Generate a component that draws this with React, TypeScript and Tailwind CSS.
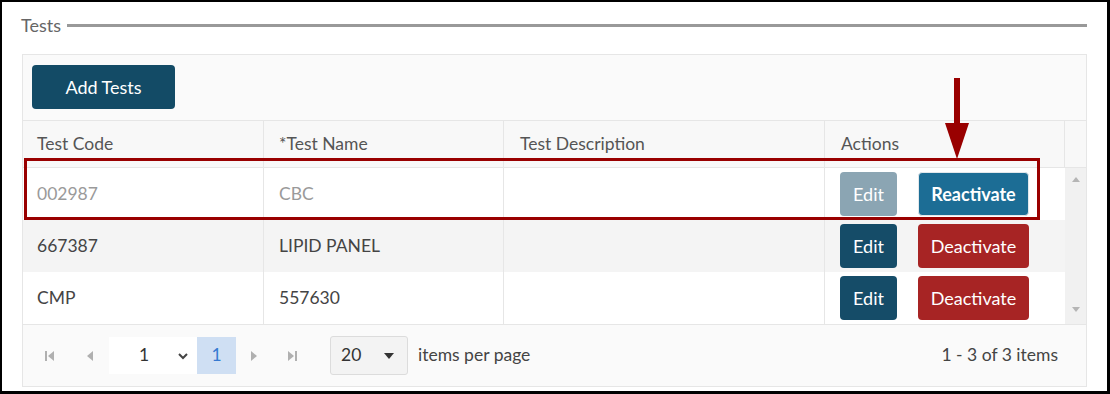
import React from 'react';

type Row = {
  code: string;
  name: string;
  description: string;
  active: boolean;
};

const rows: Row[] = [
  { code: '002987', name: 'CBC', description: '', active: false },
  { code: '667387', name: 'LIPID PANEL', description: '', active: true },
  { code: 'CMP', name: '557630', description: '', active: true },
];

const cols = 'grid grid-cols-[241px_240px_321px_1fr]';

function Tri({ dir, className }: { dir: 'left' | 'right' | 'up' | 'down'; className?: string }) {
  const points = {
    left: '8,2 8,12 2,7',
    right: '2,2 2,12 8,7',
    up: '1,8 9,8 5,3',
    down: '1,3 9,3 5,8',
  }[dir];
  return (
    <svg width="10" height="14" viewBox="0 0 10 14" className={className}>
      <polygon points={points} fill="currentColor" />
    </svg>
  );
}

function EdgeIcon({ dir }: { dir: 'first' | 'last' }) {
  return (
    <svg width="12" height="14" viewBox="0 0 12 14" className="text-[#b0b0b0]">
      {dir === 'first' ? (
        <>
          <rect x="1" y="2" width="2" height="10" fill="currentColor" />
          <polygon points="10,2 10,12 4,7" fill="currentColor" />
        </>
      ) : (
        <>
          <polygon points="2,2 2,12 8,7" fill="currentColor" />
          <rect x="9" y="2" width="2" height="10" fill="currentColor" />
        </>
      )}
    </svg>
  );
}

function ActionButtons({ active }: { active: boolean }) {
  return (
    <div className="flex items-center gap-[21px]">
      <button
        className={`h-[44px] w-[57px] rounded-[4px] text-[18px] text-white ${
          active ? 'bg-[#154c68]' : 'bg-[#8ba5b3]'
        }`}
      >
        Edit
      </button>
      {active ? (
        <button className="h-[44px] w-[111px] rounded-[4px] bg-[#a72424] text-[18px] text-white">
          Deactivate
        </button>
      ) : (
        <button className="h-[44px] w-[111px] rounded-[4px] border border-[#e2e8ec] bg-[#1c6d95] text-[18px] font-bold text-white">
          Reactivate
        </button>
      )}
    </div>
  );
}

export default function App() {
  return (
    <div className="relative h-[394px] w-[1110px] border-l-2 border-t-2 border-r-[3px] border-b-[3px] border-black bg-white font-['Lato',sans-serif]">
      {/* legend */}
      <div className="flex h-[52px] items-center pl-[19px] pr-[20px] pb-[6px]">
        <span className="text-[18px] leading-none text-[#666]">Tests</span>
        <div className="ml-[6px] h-[3px] flex-1 bg-[#999]" />
      </div>

      <div className="mr-[20px] ml-[20px] border border-[#e6e6e6] bg-[#fafafa]">
        <div className="px-[9px] pt-[10px] pb-[11px]">
          <button className="h-[44px] w-[143px] rounded-[4px] bg-[#134b66] text-[18px] text-white">
            Add Tests
          </button>
        </div>

        {/* header */}
        <div className="flex border-t border-[#e6e6e6] bg-[#f8f8f8]">
          <div className={`${cols} h-[46px] flex-1 text-[17.5px] text-[#555]`}>
            <div className="flex items-center border-r border-[#e6e6e6] pl-[14px]">Test Code</div>
            <div className="flex items-center border-r border-[#e6e6e6] pl-[15px]">*Test Name</div>
            <div className="flex items-center border-r border-[#e6e6e6] pl-[16px]">Test Description</div>
            <div className="flex items-center border-r border-[#e6e6e6] pl-[16px]">Actions</div>
          </div>
          <div className="w-[21px]" />
        </div>

        {/* body */}
        <div className="flex border-t border-[#e6e6e6]">
          <div className="flex-1">
            {rows.map((row, i) => (
              <div
                key={row.code}
                className={`${cols} h-[52px] text-[17.5px] ${i % 2 === 1 ? 'bg-[#f4f4f4]' : 'bg-white'} ${
                  row.active ? 'text-[#444]' : 'text-[#9a9a9a]'
                }`}
              >
                <div className="flex items-center border-r border-[#e6e6e6] pl-[14px]">{row.code}</div>
                <div className="flex items-center border-r border-[#e6e6e6] pl-[15px]">{row.name}</div>
                <div className="flex items-center border-r border-[#e6e6e6] pl-[16px]">{row.description}</div>
                <div className="flex items-center pl-[15px]">
                  <ActionButtons active={row.active} />
                </div>
              </div>
            ))}
          </div>
          <div className="flex w-[21px] flex-col items-center justify-between bg-[#f1f1f1] py-[6px] text-[#b5b5b5]">
            <Tri dir="up" />
            <Tri dir="down" />
          </div>
        </div>

        {/* pager */}
        <div className="flex h-[62px] items-center border-t border-[#e6e6e6] pr-[28px] pl-[7px] text-[17.5px] text-[#444]">
          <div className="flex items-center">
            <div className="flex w-[40px] justify-center">
              <EdgeIcon dir="first" />
            </div>
            <div className="ml-[8px] flex w-[24px] justify-center text-[#b0b0b0]">
              <Tri dir="left" />
            </div>
            <div className="ml-[7px] flex h-[37px] w-[88px] items-center bg-white pr-[8px] pl-[30px]">
              <span className="flex-1 text-[#333]">1</span>
              <svg width="12" height="8" viewBox="0 0 12 8" className="text-[#444]">
                <polyline points="2,2 6,6 10,2" fill="none" stroke="currentColor" strokeWidth="2" />
              </svg>
            </div>
            <div className="flex h-[37px] w-[39px] items-center justify-center bg-[#cfdff3] text-[#3579d1]">1</div>
            <div className="flex w-[36px] justify-center text-[#b0b0b0]">
              <Tri dir="right" />
            </div>
            <div className="flex w-[40px] justify-center">
              <EdgeIcon dir="last" />
            </div>
          </div>
          <div className="ml-[18px] flex h-[39px] w-[78px] items-center rounded-[3px] border border-[#dcdcdc] bg-[#f3f3f3] pr-[12px] pl-[10px]">
            <span className="flex-1 text-[#333]">20</span>
            <svg width="12" height="10" viewBox="0 0 12 10" className="text-[#333]">
              <polygon points="1,2 11,2 6,8" fill="currentColor" />
            </svg>
          </div>
          <span className="ml-[10px]">items per page</span>
          <span className="ml-auto">1 - 3 of 3 items</span>
        </div>
      </div>

      {/* highlight box */}
      <div className="pointer-events-none absolute top-[156px] left-[22px] h-[62px] w-[1016px] border-[3px] border-[#990000]" />

      {/* arrow */}
      <div className="pointer-events-none absolute top-[76px] left-[943px] flex flex-col items-center">
        <div className="h-[46px] w-[6px] bg-[#990000]" />
        <svg width="24" height="36" viewBox="0 0 24 36" className="-mt-[1px]">
          <polygon points="0,0 24,0 12,36" fill="#990000" />
        </svg>
      </div>
    </div>
  );
}
